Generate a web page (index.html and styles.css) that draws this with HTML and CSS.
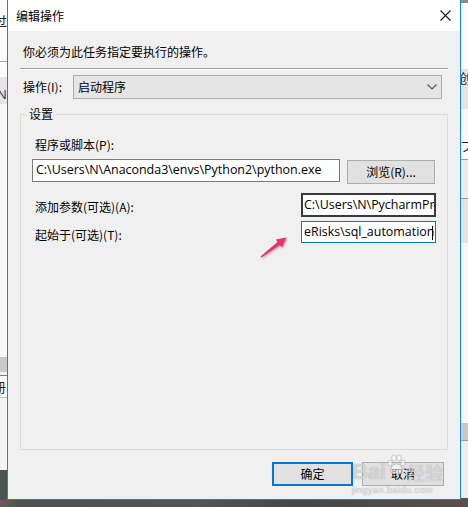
FILE: index.html
```html
<!DOCTYPE html>
<html lang="zh-CN">
<head>
<meta charset="utf-8">
<title>编辑操作</title>
<link rel="stylesheet" href="styles.css">
</head>
<body>
<div class="screen">
  <div class="row">
    <div class="bg-left">
      <div class="bl b1"><span class="glyph g-left">过</span></div>
      <div class="bl line-a"></div>
      <div class="bl b2"></div>
      <div class="bl b3"><span class="glyph g-n">N</span></div>
      <div class="bl b4"></div>
      <div class="bl b5"></div>
      <div class="bl b6"></div>
      <div class="bl line-b"></div>
      <div class="bl b7"><span class="glyph g-left2">册</span></div>
      <div class="bl line-c"></div>
      <div class="bl b8"></div>
    </div>

    <div class="dialog">
      <div class="titlebar">
        <span class="title">编辑操作</span>
        <svg class="close" width="11" height="11" viewBox="0 0 11 11"><path d="M0.5 0.5 L10.5 10.5 M10.5 0.5 L0.5 10.5" stroke="#1a1a1a" stroke-width="1.1" fill="none"/></svg>
      </div>
      <div class="body">
        <p class="intro">你必须为此任务指定要执行的操作。</p>
        <div class="sep"></div>
        <div class="action-row">
          <span class="action-label">操作(I):</span>
          <div class="combo">
            <span>启动程序</span>
            <svg class="chev" width="10" height="6" viewBox="0 0 10 6"><path d="M0.5 0.5 L5 5 L9.5 0.5" stroke="#555" stroke-width="1.1" fill="none"/></svg>
          </div>
        </div>
        <fieldset class="group">
          <legend class="legend">设置</legend>
          <div class="lbl">程序或脚本(P):</div>
          <div class="prog-row">
            <div class="input input-prog">C:\Users\N\Anaconda3\envs\Python2\python.exe</div>
            <div class="btn btn-browse">浏览(R)...</div>
          </div>
          <div class="arg-row arg-row-a">
            <span class="lbl lbl-a">添加参数(可选)(A):</span>
            <div class="input input-small input-dark">C:\Users\N\PycharmPr</div>
          </div>
          <div class="arg-row arg-row-t">
            <span class="lbl lbl-t">起始于(可选)(T):</span>
            <div class="input input-small input-focus">eRisks\sql_automation<span class="caret"></span></div>
          </div>
        </fieldset>
        <div class="buttons">
          <div class="btn btn-ok">确定</div>
          <div class="btn btn-cancel">取消</div>
        </div>
      </div>
    </div>

    <div class="bg-right">
      <div class="br r0"></div>
      <div class="br r1"></div>
      <div class="br r2"><span class="glyph g-r1">创</span></div>
      <div class="br r3"></div>
      <div class="br r4"><span class="glyph g-r2">フ</span></div>
      <div class="br rline"></div>
      <div class="br r5"></div>
      <div class="br rline"></div>
      <div class="br r6"></div>
      <div class="br r7"></div>
      <div class="br r8"></div>
      <div class="br rline"></div>
      <div class="br r9"></div>
    </div>
  </div>
  <div class="desktop"></div>

  <svg class="arrow" width="45" height="35" viewBox="0 0 45 35">
    <polygon points="10.5,26.4 27.6,12 25.8,9.4 36.4,7.6 32,17.6 30,15 11.5,27.6" fill="#f0306b"/>
  </svg>

  <div class="watermark">
    <div class="wm-top">
      <span class="wm-bai">Bai</span>
      <svg class="wm-paw" width="22" height="22" viewBox="0 0 22 22">
        <g fill="rgba(255,255,255,0.55)" stroke="rgba(120,120,120,0.45)" stroke-width="0.8">
          <ellipse cx="5" cy="9" rx="2.3" ry="3"/>
          <ellipse cx="9" cy="4" rx="2.3" ry="3"/>
          <ellipse cx="14" cy="4" rx="2.3" ry="3"/>
          <ellipse cx="18" cy="9" rx="2.3" ry="3"/>
          <path d="M11.5 10 C7 10 5 15 6 18 C7 21 10 19.5 11.5 19.5 C13 19.5 16 21 17 18 C18 15 16 10 11.5 10 Z"/>
        </g>
      </svg>
      <span class="wm-cn">经验</span>
    </div>
    <div class="wm-url">jingyan.baidu.com</div>
  </div>
</div>
</body>
</html>
```

FILE: styles.css
```css
* { box-sizing: border-box; }

html, body {
  margin: 0;
  padding: 0;
}

body {
  width: 468px;
  height: 507px;
  overflow: hidden;
  font-family: "Noto Sans CJK SC", "Open Sans", sans-serif;
  font-size: 12px;
  color: #000;
}

.screen {
  position: relative;
  width: 468px;
  height: 507px;
  display: flex;
  flex-direction: column;
  background: #4a5553;
}

.row {
  display: flex;
  height: 500px;
}

/* background windows */
.bg-left, .bg-right {
  width: 7px;
  display: flex;
  flex-direction: column;
  overflow: hidden;
}

.bl, .br { flex: none; overflow: hidden; position: relative; }

.b1 { height: 61px; background: #fafafa; }
.line-a { height: 1px; background: #a8a8a8; }
.b2 { height: 15px; background: #fdfdfd; }
.b3 { height: 27px; background: #e6e6e6; }
.b4 { height: 253px; background: #f7f7f7; }
.b5 { height: 15px; background: #c9c9c9; }
.b6 { height: 3px; background: #efefef; }
.line-b { height: 1px; background: #7f7f7f; }
.b7 { height: 21px; background: #fafafa; }
.line-c { height: 1px; background: #c3c3c3; }
.b8 { height: 72px; background: #f4f4f4; }

.glyph {
  display: block;
  white-space: nowrap;
  font-size: 13px;
  line-height: 14px;
  color: #222;
}
.g-left { margin-left: -6px; margin-top: 14px; }
.g-n { margin-left: -3px; margin-top: 10px; color: #1f3550; font-family: "Open Sans", sans-serif; }
.g-left2 { margin-left: -7px; margin-top: 4px; }

.r0 { height: 3px; background: #8c8c8c; }
.r1 { height: 66px; background: #fbfbfb; }
.r2 { height: 40px; background: #e4e4e4; }
.r3 { height: 24px; background: #f6f6f6; }
.r4 { height: 26px; background: #fafafa; }
.rline { height: 1px; background: #9a9a9a; }
.r5 { height: 38px; background: #ececec; }
.r6 { height: 44px; background: #e3e3e3; }
.r7 { height: 180px; background: #f7f7f7; }
.r8 { height: 17px; background: #c8c8c8; }
.r9 { height: 57px; background: #eeeeee; }
.g-r1 { margin-left: -2px; margin-top: 2px; }
.g-r2 { margin-left: -1px; margin-top: 6px; }

.desktop {
  height: 7px;
  background: linear-gradient(90deg, #6a5a5a 0, #4a5553 20px, #4d5856 200px, #3f4a48 300px, #5a4e50 468px);
}

/* dialog */
.dialog {
  width: 454px;
  height: 500px;
  border: 1px solid #1883d7;
  border-top: none;
  background: #f0f0f0;
  display: flex;
  flex-direction: column;
}

.titlebar {
  height: 31px;
  flex: none;
  background: #fff;
  display: flex;
  align-items: center;
  padding-left: 8px;
}

.title {
  font-size: 12px;
  line-height: 16px;
}

.close {
  margin-left: auto;
  margin-right: 9px;
}

.body {
  flex: 1;
  min-height: 0;
  display: flex;
  flex-direction: column;
  padding: 0 12px 13px;
}

.intro {
  margin: 13px 0 0;
  padding-left: 3px;
  line-height: 16px;
}

.sep {
  margin-top: 8px;
  height: 2px;
  border-top: 1px solid #a0a0a0;
  border-bottom: 1px solid #ffffff;
}

.action-row {
  margin-top: 5px;
  height: 24px;
  display: flex;
  align-items: center;
}

.action-label {
  width: 53px;
  padding-left: 3px;
  line-height: 16px;
}

.combo {
  flex: 1;
  height: 24px;
  margin-right: 6px;
  border: 1px solid #adadad;
  background: #e5e5e5;
  display: flex;
  align-items: center;
  padding-left: 4px;
  line-height: 16px;
}

.chev {
  margin-left: auto;
  margin-right: 4px;
}

/* group box */
.group {
  flex: 1;
  min-height: 0;
  margin: 7px 0 12px;
  border: 1px solid #dcdcdc;
  padding: 15px 11px 0;
  display: flex;
  flex-direction: column;
  min-width: 0;
}

.legend {
  padding: 0 2px;
  margin-left: -5px;
  line-height: 16px;
  font-size: 12px;
}

.lbl {
  padding-left: 3px;
  line-height: 16px;
}

.prog-row {
  margin-top: 6px;
  display: flex;
  align-items: flex-start;
}

.input {
  height: 23px;
  background: #fff;
  border: 1px solid #7a7a7a;
  font-family: "Open Sans", sans-serif;
  font-size: 12.45px;
  line-height: 20px;
  padding-left: 3px;
  white-space: nowrap;
  overflow: hidden;
  position: relative;
}

.input-prog {
  width: 308px;
}

.btn {
  display: flex;
  align-items: center;
  justify-content: center;
  background: #e1e1e1;
  border: 1px solid #adadad;
  height: 24px;
  line-height: 16px;
}

.btn-browse {
  width: 88px;
  margin-left: 7px;
  margin-top: 1px;
}

.arg-row {
  display: flex;
  justify-content: space-between;
  align-items: center;
}

.arg-row-a { margin-top: 9px; }
.arg-row-t { margin-top: 4px; }

.lbl-a { padding-top: 3px; }
.lbl-t { padding-top: 5px; }

.input-small {
  width: 135px;
}

.input-dark {
  height: 24px;
  border: 2px solid #3a3a3a;
  padding-left: 1px;
  line-height: 20px;
}

.input-focus {
  height: 22px;
  border: 1px solid #0078d7;
  padding-left: 2px;
  line-height: 20px;
}

.caret {
  position: absolute;
  right: 2px;
  top: 4px;
  width: 1px;
  height: 14px;
  background: #000;
}

.buttons {
  display: flex;
  justify-content: flex-end;
  gap: 9px;
  padding-right: 4px;
}

.btn-ok {
  width: 81px;
  border: 2px solid #0078d7;
}

.btn-cancel {
  width: 82px;
}

/* annotation arrow over the dialog */
.arrow {
  position: absolute;
  left: 250px;
  top: 230px;
  filter: drop-shadow(1px 1px 1px rgba(0, 0, 0, 0.3));
}

/* site watermark laid over the buttons */
.watermark {
  position: absolute;
  left: 352px;
  top: 452px;
  width: 110px;
  color: rgba(255, 255, 255, 0.6);
  text-shadow: 0 0 1px rgba(90, 90, 90, 0.6);
  pointer-events: none;
}

.wm-top {
  display: flex;
  align-items: flex-end;
  height: 32px;
  white-space: nowrap;
}

.wm-bai {
  flex: none;
  font-family: "Liberation Sans", sans-serif;
  font-weight: bold;
  font-size: 22px;
  line-height: 24px;
}

.wm-paw {
  margin: 0 -2px 8px -1px;
  flex: none;
}

.wm-cn {
  flex: none;
  font-size: 18px;
  line-height: 24px;
  margin-left: 2px;
}

.wm-url {
  font-family: "Liberation Sans", sans-serif;
  font-size: 9px;
  line-height: 10px;
  letter-spacing: 0.5px;
  margin-top: 1px;
}
```
